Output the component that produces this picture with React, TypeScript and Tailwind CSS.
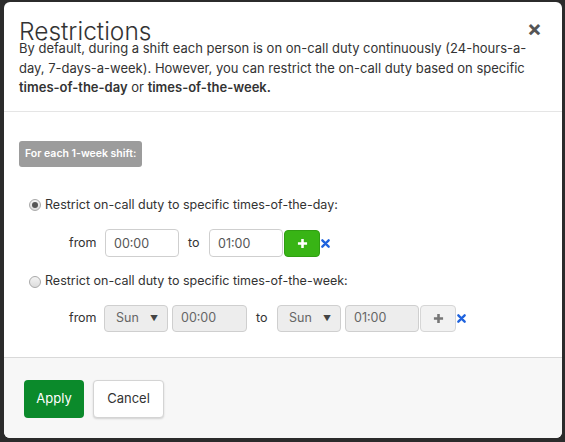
import { useState } from 'react';

const font = { fontFamily: 'Inter, "Liberation Sans", sans-serif' };

function Radio({ checked }: { checked: boolean }) {
  return (
    <span className="flex h-[12px] w-[12px] items-center justify-center rounded-full border border-[#a9a9a9] bg-gradient-to-b from-[#f4f4f4] to-[#dcdcdc]">
      {checked && <span className="h-[6px] w-[6px] rounded-full bg-[#555]" />}
    </span>
  );
}

function Remove() {
  return (
    <svg width="9" height="9" viewBox="0 0 10 10" className="ml-[1px]">
      <path d="M1.5 1.5 L8.5 8.5 M8.5 1.5 L1.5 8.5" stroke="#1f63de" strokeWidth="2.6" strokeLinecap="round" />
    </svg>
  );
}

function Plus({ color }: { color: string }) {
  return (
    <svg width="11" height="11" viewBox="0 0 12 12">
      <path d="M6 1 V11 M1 6 H11" stroke={color} strokeWidth="2.8" />
    </svg>
  );
}

function DaySelect() {
  return (
    <div className="flex h-[27px] w-[64px] items-center justify-between rounded-[4px] border border-[#cfcfcf] bg-[#ededed] pl-[11px] pr-[9px] text-[12.5px] text-[#666]">
      <span>Sun</span>
      <span className="text-[8px] text-[#444]">▼</span>
    </div>
  );
}

export default function App() {
  const [mode, setMode] = useState<'day' | 'week'>('day');

  return (
    <div className="h-[442px] w-[565px] bg-[#2b2b2b] pl-[4px] pt-[2px]" style={font}>
      <div className="flex h-[436px] w-[558px] flex-col overflow-hidden rounded-[6px] bg-white text-[#333]">
        <div className="relative border-b border-[#e5e5e5] pb-[13px] pl-[15px] pr-[18px] pt-[16px]">
          <h2 className="text-[24.5px] font-light leading-[26px] text-[#333]">Restrictions</h2>
          <button className="absolute right-[20px] top-[15px] text-[22px] font-bold leading-[22px] text-[#555]">×</button>
          <p className="-mt-[5px] text-[13px] leading-[19.5px] text-[#333]">
            By default, during a shift each person is on on-call duty continuously (24-hours-a-day, 7-days-a-week). However, you can restrict the on-call duty based on specific{' '}
            <b className="font-semibold">times-of-the-day</b> or <b className="font-semibold">times-of-the-week.</b>
          </p>
        </div>

        <div className="px-[15px] pb-[25px] pt-[29px] text-[12.5px] text-[#333]">
          <span className="inline-block h-[26px] rounded-[3px] bg-[#9c9c9c] px-[6px] text-[10.5px] font-semibold leading-[26px] text-white">
            For each 1-week shift:
          </span>

          <label className="mt-[29px] flex h-[19.5px] items-center gap-[4px] pl-[10px]" onClick={() => setMode('day')}>
            <Radio checked={mode === 'day'} />
            <span>Restrict on-call duty to specific times-of-the-day:</span>
          </label>

          <div className="mt-[14px] flex h-[28px] items-center pl-[50px]">
            <span className="mr-[9px] w-[27px]">from</span>
            <input className="h-[28px] w-[74px] rounded-[4px] border border-[#cfcfcf] px-[8px] text-[12.5px] text-[#555] outline-none" defaultValue="00:00" />
            <span className="mx-[9px] w-[12px]">to</span>
            <input className="h-[28px] w-[74px] rounded-[4px] border border-[#cfcfcf] px-[8px] text-[12.5px] text-[#555] outline-none" defaultValue="01:00" />
            <button className="ml-[1px] flex h-[27px] w-[36px] items-center justify-center rounded-[4px] border border-[#2f9e12] bg-[#38b415]">
              <Plus color="#ffffff" />
            </button>
            <Remove />
          </div>

          <label className="mt-[15px] flex h-[19.5px] items-center gap-[4px] pl-[10px]" onClick={() => setMode('week')}>
            <Radio checked={mode === 'week'} />
            <span>Restrict on-call duty to specific times-of-the-week:</span>
          </label>

          <div className="mt-[13px] flex h-[27px] items-center pl-[50px]">
            <span className="mr-[8px] w-[27px]">from</span>
            <DaySelect />
            <div className="ml-[4px] flex h-[27px] w-[75px] items-center rounded-[4px] border border-[#cfcfcf] bg-[#ededed] px-[8px] text-[12.5px] text-[#666]">00:00</div>
            <span className="mx-[9px] w-[12px]">to</span>
            <DaySelect />
            <div className="ml-[4px] flex h-[27px] w-[74px] items-center rounded-[4px] border border-[#cfcfcf] bg-[#ededed] px-[8px] text-[12.5px] text-[#666]">01:00</div>
            <button className="ml-[1px] flex h-[27px] w-[36px] items-center justify-center rounded-[4px] border border-[#d6d6d6] bg-[#f2f2f2]">
              <Plus color="#777777" />
            </button>
            <Remove />
          </div>
        </div>

        <div className="flex flex-1 items-start gap-[9px] border-t border-[#d9d9d9] bg-[#f7f7f7] px-[20px] pt-[22px]">
          <button className="h-[38px] w-[60px] rounded-[4px] bg-[#0b8a2b] text-[13px] text-white">Apply</button>
          <button className="h-[38px] w-[71px] rounded-[4px] border border-[#d4d4d4] bg-white text-[13px] text-[#333] shadow-[0_1px_2px_rgba(0,0,0,0.15)]">Cancel</button>
        </div>
      </div>
    </div>
  );
}
